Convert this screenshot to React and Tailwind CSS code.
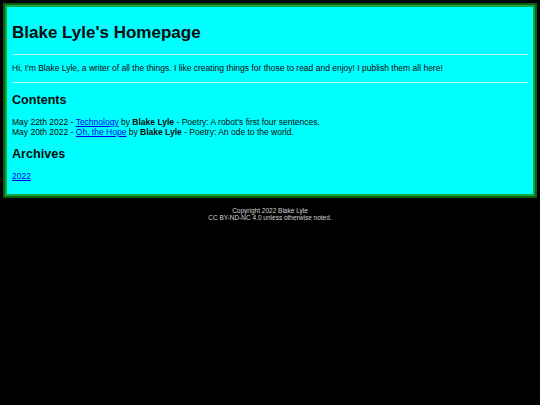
export default function App() {
  return (
    <div className="min-h-screen bg-black p-[3px] font-['Liberation_Sans',Arial,sans-serif]">
      <div className="border-2 border-[#0b5e12]">
        <div className="border-2 border-[#14a83c] bg-[#00ffff] px-[5px] pt-[16px] pb-[13px] text-[#0a0a0a]">
          <h1 className="text-[17px] leading-[20px] font-bold mb-[11px]">Blake Lyle's Homepage</h1>
          <div className="h-px bg-[#b8ffff]"></div>
          <p className="text-[8.5px] leading-[10px] mt-[8px] mb-[9px]">
            Hi, I'm Blake Lyle, a writer of all the things. I like creating things for those to read and enjoy! I publish them all here!
          </p>
          <div className="h-px bg-[#b8ffff]"></div>
          <h2 className="text-[12.6px] leading-[15px] font-bold mt-[9.5px]">Contents</h2>
          <div className="text-[8.5px] leading-[10px] mt-[9.7px]">
            <div>
              May 22th 2022 - <a href="#" className="text-[#0000ee] underline">Technology</a> by <b>Blake Lyle</b> - Poetry: A robot's first four sentences.
            </div>
            <div>
              May 20th 2022 - <a href="#" className="text-[#0000ee] underline">Oh, the Hope</a> by <b>Blake Lyle</b> - Poetry: An ode to the world.
            </div>
          </div>
          <h2 className="text-[12.6px] leading-[15px] font-bold mt-[9.7px]">Archives</h2>
          <div className="text-[8.5px] leading-[10px] mt-[9px]">
            <a href="#" className="text-[#0000ee] underline">2022</a>
          </div>
        </div>
      </div>
      <div className="mt-[9.5px] text-center text-[6.5px] leading-[7px] text-[#d4d4d4]">
        <div>Copyright 2022 Blake Lyle</div>
        <div>CC BY-ND-NC 4.0 unless otherwise noted.</div>
      </div>
    </div>
  );
}
